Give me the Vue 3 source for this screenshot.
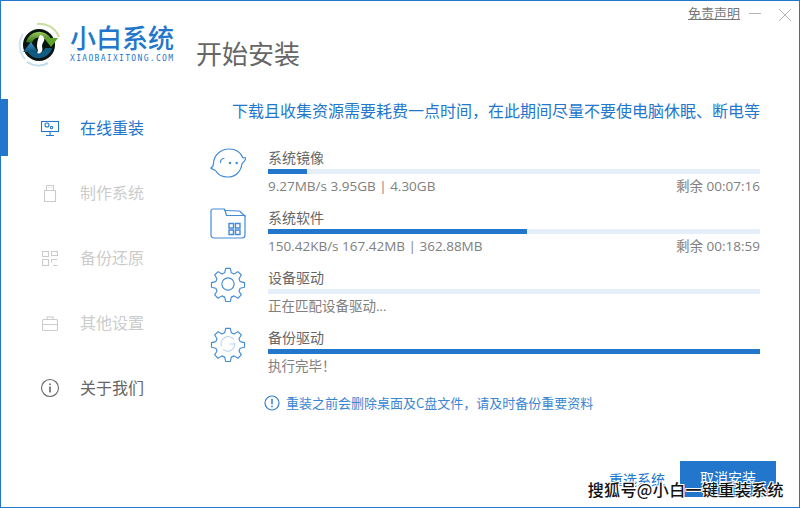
<script setup>
const nav = [
  { label: '在线重装', tone: 'active', icon: 'monitor' },
  { label: '制作系统', tone: 'muted', icon: 'usb' },
  { label: '备份还原', tone: 'muted', icon: 'grid' },
  { label: '其他设置', tone: 'muted', icon: 'case' },
  { label: '关于我们', tone: 'dark', icon: 'info' },
]
const tasks = [
  { title: '系统镜像', pct: 8, stat: '9.27MB/s 3.95GB | 4.30GB', left: '剩余 00:07:16', icon: 'face' },
  { title: '系统软件', pct: 52.7, stat: '150.42KB/s 167.42MB | 362.88MB', left: '剩余 00:18:59', icon: 'folder' },
  { title: '设备驱动', pct: 0, stat: '正在匹配设备驱动...', left: '', icon: 'gear' },
  { title: '备份驱动', pct: 100, stat: '执行完毕！', left: '', icon: 'gearsync' },
]
const gear = 'M15.500 1.500h5l1 4.600 3 1.300 4-2.500 3.600 3.600-2.500 4 1.300 3 4.600 1v5l-4.600 1-1.300 3 2.500 4-3.600 3.600-4-2.500-3 1.300-1 4.600h-5l-1-4.600-3-1.300-4 2.500-3.600-3.600 2.500-4-1.300-3-4.600-1v-5l4.600-1 1.300-3-2.500-4 3.600-3.600 4 2.500 3-1.300z'
</script>

<template>
  <div class="win">
    <aside class="side">
      <div class="brand">
        <svg class="logo" width="44" height="46" viewBox="0 0 44 46">
          <defs>
            <linearGradient id="lg-green" x1="0" y1="0" x2="0" y2="1">
              <stop offset="0" stop-color="#9cc85a" />
              <stop offset="1" stop-color="#2c6a16" />
            </linearGradient>
            <linearGradient id="lg-blue" x1="0" y1="0" x2="0" y2="1">
              <stop offset="0" stop-color="#3c9ccf" />
              <stop offset="1" stop-color="#0c4f73" />
            </linearGradient>
          </defs>
          <path d="M7 37A20.500 20.500 0 0 1 5 12" fill="none" stroke="#cfe4ee" stroke-width="2" />
          <path d="M9 40A20.500 20.500 0 0 0 30 41" fill="none" stroke="#bcdcea" stroke-width="2" />
          <path d="M19 2A20.500 20.500 0 0 1 41 15" fill="none" stroke="#c9dfa0" stroke-width="2" />
          <circle cx="21" cy="23" r="16" fill="#07140f" />
          <path d="M8 20A13.500 13.500 0 0 1 33 17h-8a7 7 0 0 0-11 4z" fill="url(#lg-green)" />
          <path d="M26 16h14l-7 9z" fill="#5ea42a" />
          <path d="M34 26A13.500 13.500 0 0 1 9 29h7a7 7 0 0 0 11-3z" fill="#0f5d84" />
          <path d="M13 20l-8 10h15z" fill="url(#lg-blue)" />
          <path d="M22 13c3 0 5 3 4 6-1 2-2 3-2 5s1 3 0 5-3 3-5 2c2-2 0-4 0-7 0-4 1-8 3-11z" fill="#fff" />
        </svg>
        <div class="brand-text">
          <div class="brand-name">小白系统</div>
          <div class="brand-url">XIAOBAIXITONG.COM</div>
        </div>
      </div>
      <nav class="nav">
        <div v-for="n in nav" :key="n.label" class="nav-item" :class="n.tone">
          <svg class="nav-icon" width="20" height="22" viewBox="0 0 20 22" fill="none" stroke="currentColor" stroke-width="1.100">
            <template v-if="n.icon === 'monitor'">
              <rect x="1.500" y="5.500" width="17" height="10" />
              <circle cx="7" cy="9" r="2" /><circle cx="11.500" cy="11.500" r="1.200" />
              <path d="M10 15.500v3.500M6 19.500h8" />
            </template>
            <template v-else-if="n.icon === 'usb'">
              <path d="M4.500 9.500h11v11h-11zM6.500 9V4.500h7V9M8.500 6.500h.8M11 6.500h.8" />
            </template>
            <template v-else-if="n.icon === 'grid'">
              <rect x="2.500" y="5.500" width="6" height="5" /><rect x="11.500" y="5.500" width="6" height="4" />
              <rect x="2.500" y="13.500" width="6" height="6" /><path d="M17.500 13.500h-6v3M13 19.500h4.500" />
            </template>
            <template v-else-if="n.icon === 'case'">
              <rect x="2.500" y="8.500" width="15" height="11" rx="1" />
              <path d="M7 8.500V6h6v2.500M2.500 13.500h15" />
            </template>
            <template v-else>
              <circle cx="10" cy="12" r="8.500" />
              <path d="M10 10.500v6M10 7.500v1.500" stroke-width="1.600" />
            </template>
          </svg>
          <span>{{ n.label }}</span>
        </div>
      </nav>
    </aside>

    <main class="main">
      <div class="top">
        <h1 class="title">开始安装</h1>
        <div class="winctl">
          <a class="legal">免责声明</a>
          <svg class="min" width="12" height="12" viewBox="0 0 12 12" stroke="#b5b5b5"><path d="M0 6.500h12" /></svg>
          <svg class="close" width="12" height="12" viewBox="0 0 12 12" stroke="#b5b5b5"><path d="M0 0l12 12M12 0L0 12" /></svg>
        </div>
      </div>

      <p class="headline">下载且收集资源需要耗费一点时间，在此期间尽量不要使电脑休眠、断电等</p>

      <div class="tasks">
        <div v-for="t in tasks" :key="t.title" class="task">
          <svg class="task-icon" width="36" height="36" viewBox="0 0 36 36" fill="none" stroke="#438bd6" stroke-width="1.200" stroke-linejoin="round" stroke-linecap="round">
            <template v-if="t.icon === 'face'">
              <path d="M.7 21C3 20 3.500 18.500 3.500 16 4 8 11 2 19 2c7 0 12 4 14 9l3-.5c-.5 2.500-2 4.500-4 6C31 25 25 30 18 30c-6 0-10-2-12.500-6.500C4 23 2 22 .7 21z" />
              <path d="M14 11.500c-2 0-3.500 1.500-3.500 4" />
              <circle cx="20" cy="16" r=".6" fill="#438bd6" /><circle cx="26.700" cy="16" r=".6" fill="#438bd6" />
            </template>
            <template v-else-if="t.icon === 'folder'">
              <path d="M1 4a2 2 0 0 1 2-2h11.500l2 6.500H35V28a3 3 0 0 1-3 3H4a3 3 0 0 1-3-3z" />
              <path d="M15 3.500l14 .5a1.500 1.500 0 0 1 1.500 1L35 9" />
              <path d="M19 16.500h4.500V21H19zM25.500 16.500H30V21h-4.500zM19 23h4.500v4.500H19zM25.500 23H30v4.500h-4.500z" stroke-width="1.400" stroke-linejoin="miter" />
            </template>
            <template v-else-if="t.icon === 'gear'">
              <g transform="translate(1 0) scale(.944)">
                <path :d="gear" /><circle cx="18" cy="18" r="6.500" />
              </g>
            </template>
            <template v-else>
              <g transform="translate(1 0) scale(.944)">
                <path :d="gear" />
                <path d="M11 20a7.500 7.500 0 0 1 13-7" stroke="#b9d4f1" />
                <path d="M25 17a7.500 7.500 0 0 1-12 7" stroke="#b9d4f1" />
                <path d="M20 18h5" stroke="#b9d4f1" />
              </g>
            </template>
          </svg>
          <div class="task-body">
            <div class="task-title">{{ t.title }}</div>
            <div class="bar"><div class="fill" :style="{ width: t.pct + '%' }"></div></div>
            <div class="task-foot"><span>{{ t.stat }}</span><span>{{ t.left }}</span></div>
          </div>
        </div>
      </div>

      <div class="notice">
        <svg width="16" height="16" viewBox="0 0 16 16" fill="none" stroke="#2f80d0" stroke-width="1.200">
          <circle cx="8" cy="8" r="7" /><path d="M8 3.800v5.400M8 10.800v1.400" stroke-width="1.500" />
        </svg>
        <span>重装之前会删除桌面及C盘文件，请及时备份重要资料</span>
      </div>

      <div class="actions">
        <span class="link">重选系统</span>
        <span class="btn">取消安装</span>
      </div>
    </main>
    <div class="mark">搜狐号@小白一键重装系统</div>
  </div>
</template>

<style>
html, body { margin: 0; background: #fff; overflow: hidden; }
</style>

<style scoped>
.win {
  position: relative; width: 800px; height: 508px; box-sizing: border-box;
  border: 1px solid #2277cc; display: flex; background: #fff; overflow: hidden;
  font-family: "Noto Sans CJK SC", "Noto Sans", sans-serif; color: #777;
}
.side { width: 194px; flex: none; }
.brand { display: flex; gap: 8px; padding: 20px 0 0 17px; height: 75px; box-sizing: border-box; }
.logo { flex: none; margin-top: 1px; }
.brand-name { font-size: 26px; line-height: 32px; color: #2277cc; font-weight: 500; white-space: nowrap; }
.brand-url { font-family: "DejaVu Sans Mono", monospace; font-size: 8px; line-height: 10px; letter-spacing: 1.320px; color: #2277cc; white-space: nowrap; margin-top: 1px; }
.nav { margin-top: 18px; }
.nav-item { position: relative; height: 65px; display: flex; align-items: center; padding-left: 39px; gap: 20px; font-size: 16px; }
.nav-item.active { color: #2277cc; }
.nav-item.active::before { content: ""; position: absolute; left: 0; top: 5px; width: 7px; height: 57px; background: #2277cc; }
.nav-item.muted { color: #cccccc; }
.nav-item.dark { color: #666; }
.nav-icon { flex: none; }
.main { flex: 1; min-width: 0; padding-right: 39px; display: flex; flex-direction: column; position: relative; }
.top { display: flex; justify-content: space-between; }
.title { margin: 33px 0 0 1px; font-size: 26px; line-height: 38px; font-weight: 400; color: #666; }
.winctl { position: absolute; top: 3px; right: 8px; display: flex; align-items: center; }
.min { margin-left: 9px; }
.close { margin-left: 18px; margin-top: 4px; }
.legal { font-size: 13px; line-height: 18px; color: #777; text-decoration: underline; }
.headline { margin: 26px 0 0; font-size: 16px; line-height: 24px; color: #2277cc; text-align: right; white-space: nowrap; }
.tasks { margin-top: 25px; margin-left: 15px; display: flex; flex-direction: column; }
.task { display: flex; gap: 22px; height: 60px; }
.task-icon { flex: none; }
.task-body { flex: 1; min-width: 0; }
.task-title { font-size: 14px; line-height: 20px; color: #666; }
.bar { height: 5px; background: #e6eefa; margin-top: 2px; }
.fill { height: 100%; background: #2277cc; }
.task-foot { display: flex; justify-content: space-between; font-family: "Open Sans", "Noto Sans CJK SC", sans-serif; font-size: 13.500px; line-height: 20px; margin-top: 2px; color: #808080; }
.notice { display: flex; align-items: center; gap: 6px; margin: 6px 0 0 69px; font-size: 13px; line-height: 20px; color: #3a86d2; }
.actions { display: flex; align-items: center; justify-content: flex-end; margin-right: -16px; margin-top: 48px; gap: 15px; }
.link { font-size: 14px; color: #2277cc; }
.btn { width: 96px; height: 36px; line-height: 32px; text-align: center; background: #2277cc; color: #fff; font-size: 14px; }
.mark { position: absolute; right: 15px; bottom: 8px; font-size: 16px; line-height: 20px; font-weight: 500; letter-spacing: .4px; color: #111; text-shadow: 1px 1px 0 #fff, -1px -1px 0 #fff, 1px -1px 0 #fff, -1px 1px 0 #fff; white-space: nowrap; }
</style>
